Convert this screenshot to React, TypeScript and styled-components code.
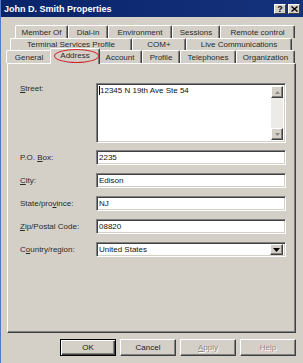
import styled, { createGlobalStyle, css } from "styled-components";

const GlobalStyle = createGlobalStyle`
  html, body {
    margin: 0;
    padding: 0;
    background: #d4d0c8;
  }
  body {
    font-family: "Liberation Sans", Arial, sans-serif;
    font-size: 8px;
    color: #1c1c1c;
  }
`;

const tabRows = [
  { indent: 14, height: 13, tabs: [["Member Of", 53], ["Dial-in", 40], ["Environment", 64], ["Sessions", 48], ["Remote control", 75]] },
  { indent: 9, height: 12, tabs: [["Terminal Services Profile", 122], ["COM+", 54], ["Live Communications", 106]] },
  { indent: 5, height: 13, tabs: [["General", 46], ["Address", 46], ["Account", 44], ["Profile", 38], ["Telephones", 56], ["Organization", 59]] },
] as const;

const fields = [
  { label: "P.O. ", key: "B", rest: "ox:", value: "2235" },
  { label: "", key: "C", rest: "ity:", value: "Edison" },
  { label: "State/pro", key: "v", rest: "ince:", value: "NJ" },
  { label: "", key: "Z", rest: "ip/Postal Code:", value: "08820" },
];

export default function App() {
  return (
    <>
      <GlobalStyle />
      <Window>
        <TitleBar>
          <Title>John D. Smith Properties</Title>
          <CaptionButtons>
            <CaptionButton>?</CaptionButton>
            <CaptionButton>
              <svg width="7" height="6" viewBox="0 0 7 6">
                <path d="M0.5 0.5 L6.5 5.5 M6.5 0.5 L0.5 5.5" stroke="#000" strokeWidth="1.4" />
              </svg>
            </CaptionButton>
          </CaptionButtons>
        </TitleBar>

        <TabArea>
          {tabRows.map((row, i) => (
            <TabRow key={i} $indent={row.indent} $h={row.height}>
              {row.tabs.map(([name, w]) => (
                <Tab key={name} $w={w} $selected={name === "Address"}>
                  {name}
                </Tab>
              ))}
            </TabRow>
          ))}
        </TabArea>

        <Panel>
          <FormRow>
            <Label $top>
              <u>S</u>treet:
            </Label>
            <TextArea>
              <FieldText>
                <Caret />
                12345 N 19th Ave Ste 54
              </FieldText>
              <ScrollBar>
                <ScrollButton>
                  <svg width="5" height="3" viewBox="0 0 5 3">
                    <path d="M2.5 0 L5 3 L0 3 Z" fill="#8c8a86" />
                  </svg>
                </ScrollButton>
                <ScrollButton>
                  <svg width="5" height="3" viewBox="0 0 5 3">
                    <path d="M0 0 L5 0 L2.5 3 Z" fill="#8c8a86" />
                  </svg>
                </ScrollButton>
              </ScrollBar>
            </TextArea>
          </FormRow>

          {fields.map((f) => (
            <FormRow key={f.value}>
              <Label>
                {f.label}
                <u>{f.key}</u>
                {f.rest}
              </Label>
              <Field>
                <FieldText>{f.value}</FieldText>
              </Field>
            </FormRow>
          ))}

          <FormRow>
            <Label>
              C<u>o</u>untry/region:
            </Label>
            <Field>
              <FieldText>United States</FieldText>
              <DropButton>
                <svg width="7" height="4" viewBox="0 0 7 4">
                  <path d="M0 0 L7 0 L3.5 4 Z" fill="#000" />
                </svg>
              </DropButton>
            </Field>
          </FormRow>
        </Panel>

        <ButtonBar>
          <DialogButton $default>OK</DialogButton>
          <DialogButton>Cancel</DialogButton>
          <DialogButton $disabled>
            <u>A</u>pply
          </DialogButton>
          <DialogButton $disabled>Help</DialogButton>
        </ButtonBar>

        <Annotation />
      </Window>
    </>
  );
}

const Window = styled.div`
  position: relative;
  width: 303px;
  height: 363px;
  box-sizing: border-box;
  background: #d4d0c8;
  border-left: 1px solid #4f7cc4;
  display: flex;
  flex-direction: column;
  overflow: hidden;
`;

const TitleBar = styled.div`
  height: 17px;
  flex-shrink: 0;
  display: flex;
  align-items: center;
  justify-content: space-between;
  padding: 1px 3px 0 3px;
  box-sizing: border-box;
  background: linear-gradient(90deg, #0a246a 0%, #14327c 100%);
`;

const Title = styled.div`
  color: #fff;
  font-size: 9px;
  font-weight: bold;
`;

const CaptionButtons = styled.div`
  display: flex;
  gap: 2px;
`;

const CaptionButton = styled.div`
  width: 12px;
  height: 10px;
  box-sizing: border-box;
  display: flex;
  align-items: center;
  justify-content: center;
  background: #d4d0c8;
  border: 1px solid;
  border-color: #fff #404040 #404040 #fff;
  font-size: 9px;
  font-weight: bold;
  color: #000;
`;

const TabArea = styled.div`
  margin-top: 8px;
  display: flex;
  flex-direction: column;
`;

const TabRow = styled.div<{ $indent: number; $h: number }>`
  display: flex;
  height: ${(p) => p.$h}px;
  padding-left: ${(p) => p.$indent}px;
`;

const Tab = styled.div<{ $w: number; $selected?: boolean }>`
  box-sizing: border-box;
  width: ${(p) => p.$w}px;
  height: 100%;
  display: flex;
  align-items: center;
  justify-content: center;
  white-space: nowrap;
  background: #d4d0c8;
  border-top: 1px solid #fff;
  border-left: 1px solid #fff;
  border-right: 1px solid #404040;
  border-radius: 2px 2px 0 0;
  box-shadow: inset -1px 0 #808080;
  color: #2a2a2a;
  ${(p) =>
    p.$selected &&
    css`
      position: relative;
      z-index: 1;
      width: ${p.$w + 4}px;
      margin: -2px -2px -1px;
      height: calc(100% + 3px);
      padding-bottom: 2px;
    `}
`;

const Panel = styled.div`
  flex: 1;
  margin: 0 7px 0 6px;
  box-sizing: border-box;
  border: 1px solid;
  border-color: #fff #404040 #404040 #fff;
  box-shadow: inset -1px -1px #808080;
  padding: 19px 9px 0 12px;
  display: flex;
  flex-direction: column;
  gap: 8px;
`;

const FormRow = styled.div`
  display: flex;
  align-items: flex-start;
  &:first-child {
    margin-bottom: -1px;
  }
`;

const Label = styled.div<{ $top?: boolean }>`
  width: 76px;
  height: ${(p) => (p.$top ? "auto" : "15px")};
  padding-top: ${(p) => (p.$top ? "1px" : "0")};
  display: flex;
  align-items: center;
  white-space: pre;
  color: #2a2a2a;
`;

const sunken = css`
  box-sizing: border-box;
  background: #fff;
  border: 1px solid;
  border-color: #808080 #fff #fff #808080;
  box-shadow: inset 1px 1px #404040, inset -1px -1px #d4d0c8;
`;

const Field = styled.div`
  ${sunken};
  width: 190px;
  height: 15px;
  display: flex;
  align-items: center;
  padding: 0 2px 0 0;
`;

const TextArea = styled.div`
  ${sunken};
  width: 190px;
  height: 60px;
  display: flex;
  align-items: flex-start;
  padding: 2px 2px 2px 0;
`;

const FieldText = styled.div`
  flex: 1;
  display: flex;
  align-items: center;
  padding-left: 2px;
  color: #111;
  white-space: nowrap;
`;

const Caret = styled.span`
  width: 1px;
  height: 9px;
  background: #000;
  margin-right: 0px;
`;

const ScrollBar = styled.div`
  width: 12px;
  height: 100%;
  display: flex;
  flex-direction: column;
  justify-content: space-between;
  background: #ecebe7;
`;

const ScrollButton = styled.div`
  width: 12px;
  height: 12px;
  box-sizing: border-box;
  display: flex;
  align-items: center;
  justify-content: center;
  background: #d4d0c8;
  border: 1px solid;
  border-color: #fff #404040 #404040 #fff;
  box-shadow: inset -1px -1px #808080;
`;

const DropButton = styled(ScrollButton)`
  height: 11px;
  width: 13px;
`;

const ButtonBar = styled.div`
  display: flex;
  justify-content: flex-end;
  gap: 4px;
  padding: 6px 7px 7px 0;
`;

const DialogButton = styled.div<{ $default?: boolean; $disabled?: boolean }>`
  width: 56px;
  height: 17px;
  box-sizing: border-box;
  display: flex;
  align-items: center;
  justify-content: center;
  background: #d4d0c8;
  border: 1px solid;
  border-color: #fff #404040 #404040 #fff;
  box-shadow: inset -1px -1px #808080;
  color: #1c1c1c;
  ${(p) =>
    p.$default &&
    css`
      border-color: #000;
      box-shadow: inset 1px 1px #fff, inset -1px -1px #404040, inset -2px -2px #808080;
    `}
  ${(p) =>
    p.$disabled &&
    css`
      color: #8e8c88;
      text-shadow: 1px 1px #fff;
    `}
`;

const Annotation = styled.div`
  position: absolute;
  left: 53px;
  top: 49px;
  width: 45px;
  height: 14px;
  box-sizing: border-box;
  border: 1px solid #d2262c;
  border-radius: 50%;
  z-index: 2;
`;
